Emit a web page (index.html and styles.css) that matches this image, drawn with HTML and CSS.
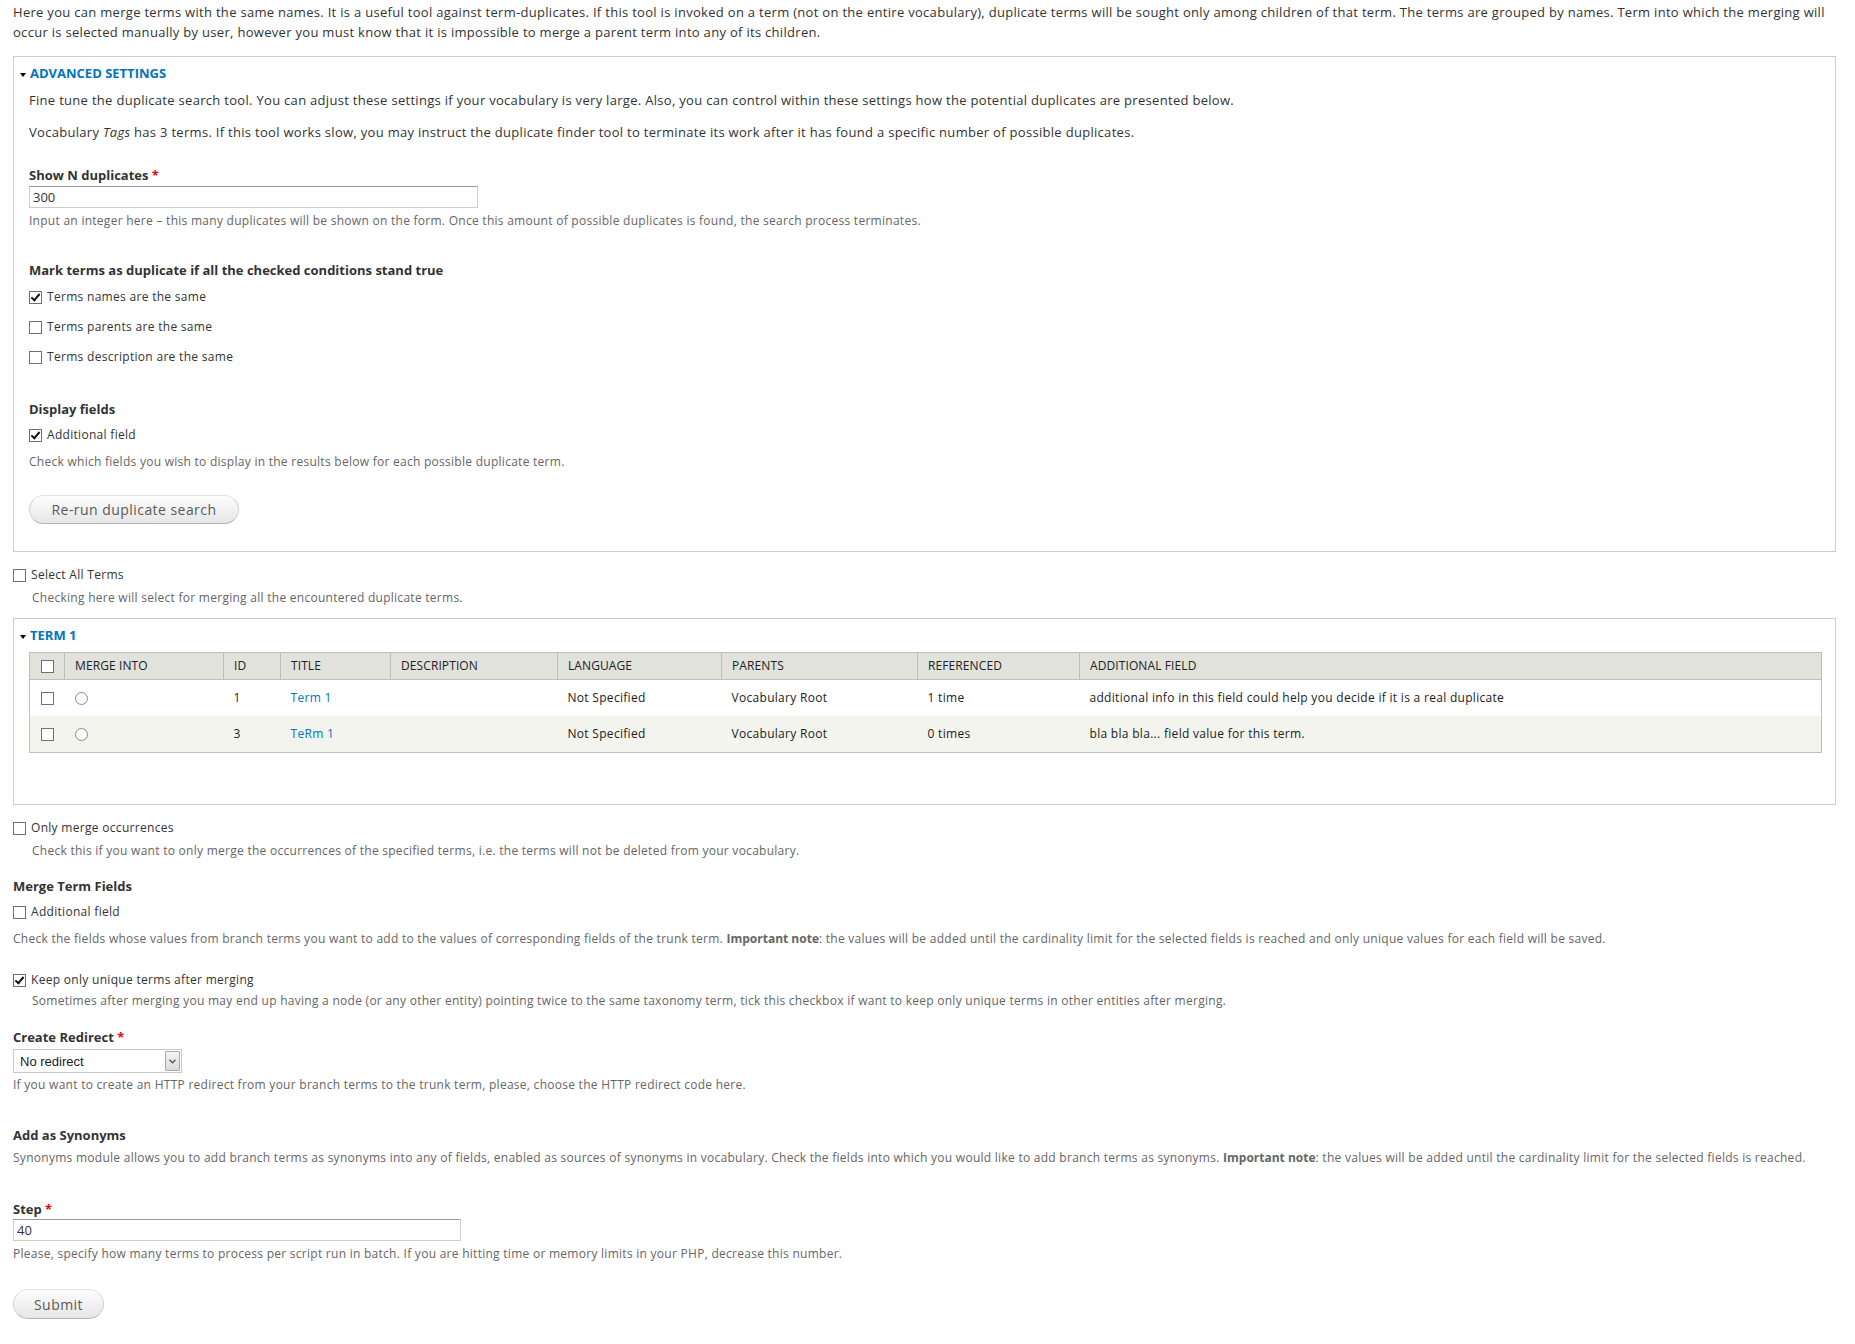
FILE: index.html
```html
<!DOCTYPE html>
<html lang="en">
<head>
  <meta charset="UTF-8" />
  <title>Merge duplicate terms</title>
  <link rel="stylesheet" href="styles.css">
</head>
<body>

  <p class="intro">Here you can merge terms with the same names. It is a useful tool against term-duplicates. If this tool is invoked on a term (not on the entire vocabulary), duplicate terms will be sought only among children of that term. The terms are grouped by names. Term into which the merging will occur is selected manually by user, however you must know that it is impossible to merge a parent term into any of its children.</p>

  <form onsubmit="event.preventDefault();">

    <div class="fieldset">
      <div class="legend"><a href="#">Advanced settings</a></div>
      <div class="fieldset-wrapper">
        <p class="lead">Fine tune the duplicate search tool. You can adjust these settings if your vocabulary is very large. Also, you can control within these settings how the potential duplicates are presented below.</p>
        <p class="lead last">Vocabulary <em>Tags</em> has 3 terms. If this tool works slow, you may instruct the duplicate finder tool to terminate its work after it has found a specific number of possible duplicates.</p>

        <div class="form-item">
          <label class="field-label" for="maxDupes">Show N duplicates <span class="req">*</span></label>
          <input class="form-text wide" type="text" id="maxDupes" value="300" />
          <div class="description">Input an integer here – this many duplicates will be shown on the form. Once this amount of possible duplicates is found, the search process terminates.</div>
        </div>

        <div class="form-item group">
          <div class="field-label">Mark terms as duplicate if all the checked conditions stand true</div>
          <label class="check first"><input type="checkbox" checked /> Terms names are the same</label>
          <label class="check"><input type="checkbox" /> Terms parents are the same</label>
          <label class="check"><input type="checkbox" /> Terms description are the same</label>
        </div>

        <div class="form-item group">
          <div class="field-label">Display fields</div>
          <label class="check tight"><input type="checkbox" checked /> Additional field</label>
          <div class="description gap">Check which fields you wish to display in the results below for each possible duplicate term.</div>
        </div>

        <button type="button" class="button rerun">Re-run duplicate search</button>
      </div>
    </div>

    <div class="form-item select-all">
      <label class="check"><input type="checkbox" /> Select All Terms</label>
      <div class="description indent">Checking here will select for merging all the encountered duplicate terms.</div>
    </div>

    <div class="fieldset term">
      <div class="legend"><a href="#">Term 1</a></div>
      <div class="fieldset-wrapper">
        <table class="dupes">
          <colgroup>
            <col class="c-check"><col class="c-merge"><col class="c-id"><col class="c-title">
            <col class="c-desc"><col class="c-lang"><col class="c-parents"><col class="c-ref"><col>
          </colgroup>
          <thead>
            <tr>
              <th><input type="checkbox" /></th>
              <th>Merge into</th>
              <th>ID</th>
              <th>Title</th>
              <th>Description</th>
              <th>Language</th>
              <th>Parents</th>
              <th>Referenced</th>
              <th>Additional field</th>
            </tr>
          </thead>
          <tbody>
            <tr class="odd">
              <td><input type="checkbox" /></td>
              <td><input type="radio" name="trunk" /></td>
              <td>1</td>
              <td><a href="#">Term 1</a></td>
              <td></td>
              <td>Not Specified</td>
              <td>Vocabulary Root</td>
              <td>1 time</td>
              <td>additional info in this field could help you decide if it is a real duplicate</td>
            </tr>
            <tr class="even">
              <td><input type="checkbox" /></td>
              <td><input type="radio" name="trunk" /></td>
              <td>3</td>
              <td><a href="#">TeRm 1</a></td>
              <td></td>
              <td>Not Specified</td>
              <td>Vocabulary Root</td>
              <td>0 times</td>
              <td>bla bla bla... field value for this term.</td>
            </tr>
          </tbody>
        </table>
      </div>
    </div>

    <div class="form-item only-occ">
      <label class="check"><input type="checkbox" /> Only merge occurrences</label>
      <div class="description indent">Check this if you want to only merge the occurrences of the specified terms, i.e. the terms will not be deleted from your vocabulary.</div>
    </div>

    <div class="form-item merge-fields">
      <div class="field-label">Merge Term Fields</div>
      <label class="check tight"><input type="checkbox" /> Additional field</label>
      <div class="description gap">Check the fields whose values from branch terms you want to add to the values of corresponding fields of the trunk term. <strong>Important note</strong>: the values will be added until the cardinality limit for the selected fields is reached and only unique values for each field will be saved.</div>
    </div>

    <div class="form-item keep-unique">
      <label class="check"><input type="checkbox" checked /> Keep only unique terms after merging</label>
      <div class="description indent near">Sometimes after merging you may end up having a node (or any other entity) pointing twice to the same taxonomy term, tick this checkbox if want to keep only unique terms in other entities after merging.</div>
    </div>

    <div class="form-item redirect">
      <label class="field-label" for="redirect">Create Redirect <span class="req">*</span></label>
      <div class="select-box">
        <select id="redirect" class="form-select">
          <option>No redirect</option>
          <option>301 Moved Permanently</option>
          <option>302 Found</option>
        </select>
        <span class="select-arrow">
          <svg width="7" height="5" viewBox="0 0 7 5"><path d="M0.5 0.8 L3.5 3.8 L6.5 0.8" fill="none" stroke="#555" stroke-width="1.3"/></svg>
        </span>
      </div>
      <div class="description tight">If you want to create an HTTP redirect from your branch terms to the trunk term, please, choose the HTTP redirect code here.</div>
    </div>

    <div class="form-item synonyms">
      <div class="field-label">Add as Synonyms</div>
      <div class="description">Synonyms module allows you to add branch terms as synonyms into any of fields, enabled as sources of synonyms in vocabulary. Check the fields into which you would like to add branch terms as synonyms. <strong>Important note</strong>: the values will be added until the cardinality limit for the selected fields is reached.</div>
    </div>

    <div class="form-item step">
      <label class="field-label" for="step">Step <span class="req">*</span></label>
      <input class="form-text" type="text" id="step" value="40" />
      <div class="description">Please, specify how many terms to process per script run in batch. If you are hitting time or memory limits in your PHP, decrease this number.</div>
    </div>

    <button type="submit" class="button submit">Submit</button>
  </form>

</body>
</html>
```

FILE: styles.css
```css
* {
  box-sizing: border-box;
}

body {
  font-family: "Open Sans", Arial, sans-serif;
  font-size: 13px;
  line-height: 20px;
  letter-spacing: 0.3px;
  color: #333;
  background: #fff;
  margin: 0;
  padding: 2px 19px 40px 13px;
}

a {
  color: #0074bd;
  text-decoration: none;
}

p {
  margin: 0;
}

strong {
  letter-spacing: 0;
}

.intro {
  margin-bottom: 14px;
}

/* collapsible fieldsets */
.fieldset {
  border: 1px solid #ccc;
  padding: 6px 13px 27px 15px;
}

.legend {
  font-weight: bold;
  text-transform: uppercase;
  letter-spacing: 0;
  margin: 0 0 7px -9px;
}

.legend::before {
  content: "";
  display: inline-block;
  border-left: 3px solid transparent;
  border-right: 3px solid transparent;
  border-top: 4px solid #000;
  margin-right: 4px;
  vertical-align: middle;
}

.lead {
  margin-bottom: 12px;
}

.lead.last {
  margin-bottom: 23px;
}

/* form items */
.field-label {
  display: block;
  font-weight: bold;
  letter-spacing: 0;
}

.req {
  color: #e00;
}

.form-text {
  display: block;
  width: 449px;
  height: 22px;
  margin-top: 1px;
  padding: 1px 3px;
  border: 1px solid #ccc;
  border-top-color: #999;
  font-family: inherit;
  font-size: 13px;
  color: #333;
}

.description {
  font-size: 12px;
  line-height: 20px;
  letter-spacing: 0.27px;
  color: #666;
  margin-top: 3px;
}

.description.indent {
  margin-left: 19px;
}

.description.near {
  margin-top: 1px;
}

.description.tight {
  margin-top: 2px;
}

.description.gap {
  margin-top: 7px;
}

.group {
  margin-top: 29px;
}

.group + .group {
  margin-top: 32px;
}

.check {
  display: flex;
  align-items: center;
  gap: 5px;
  font-size: 12px;
  margin-top: 10px;
}

.check.first {
  margin-top: 7px;
}

.check.tight {
  margin-top: 6px;
}

input[type="checkbox"] {
  appearance: none;
  display: inline-grid;
  place-content: center;
  width: 13px;
  height: 13px;
  margin: 0;
  border: 1px solid #707070;
  background: #fff;
  flex: none;
}

input[type="checkbox"]:checked::after {
  content: "";
  width: 3px;
  height: 7px;
  border-right: 2px solid #111;
  border-bottom: 2px solid #111;
  transform: translateY(-1px) rotate(40deg);
}

input[type="radio"] {
  appearance: none;
  display: block;
  width: 13px;
  height: 13px;
  margin: 0;
  border: 1px solid #8a8a8a;
  border-radius: 50%;
  background: #fcfcfc;
}

/* pill buttons */
.button {
  display: inline-block;
  font-family: inherit;
  font-size: 14px;
  line-height: 19px;
  letter-spacing: 0.45px;
  color: #5a5a5a;
  background: linear-gradient(#fdfdfd, #e6e6e6);
  border: 1px solid #d2d2d2;
  border-top-color: #e4e4e4;
  border-bottom-color: #b4b4b4;
  border-radius: 20px;
  padding: 4px 12px;
  cursor: pointer;
}

.rerun {
  width: 210px;
  height: 29px;
  margin-top: 23px;
}

.submit {
  width: 91px;
  height: 30px;
  margin-top: 25px;
}

/* below the settings */
.select-all {
  margin-top: 13px;
}

.select-all .check,
.only-occ .check,
.keep-unique .check {
  margin-top: 0;
}

.term {
  margin-top: 10px;
  padding-bottom: 51px;
}

.term .legend {
  margin-bottom: 7px;
}

table.dupes {
  width: 100%;
  table-layout: fixed;
  border-collapse: collapse;
  border: 1px solid #bebfb9;
  font-size: 12px;
}

.c-check { width: 35px; }
.c-merge { width: 159px; }
.c-id { width: 57px; }
.c-title { width: 110px; }
.c-desc { width: 167px; }
.c-lang { width: 164px; }
.c-parents { width: 196px; }
.c-ref { width: 162px; }

.dupes th {
  background: #e1e2dc;
  border: 1px solid #bebfb9;
  font-weight: normal;
  text-transform: uppercase;
  text-align: left;
  letter-spacing: 0.1px;
  padding: 3px 10px;
  line-height: 20px;
  color: #222;
}

.dupes td {
  padding: 8px 10px;
  line-height: 20px;
  color: #222;
}

.dupes th:first-child,
.dupes td:first-child {
  padding-left: 11px;
}

.dupes th input,
.dupes td input {
  vertical-align: middle;
}

.dupes tr.odd { background: #fff; }
.dupes tr.even { background: #f3f4ee; }

.only-occ {
  margin-top: 13px;
}

.merge-fields {
  margin-top: 15px;
}

.keep-unique {
  margin-top: 21px;
}

.redirect {
  margin-top: 16px;
}

/* select with a drawn drop-down button */
.select-box {
  display: flex;
  width: 169px;
  height: 24px;
  margin-top: 2px;
  border: 1px solid #c8c8c8;
  background: #fff;
  padding: 1px;
}

.form-select {
  appearance: none;
  flex: 1;
  min-width: 0;
  border: 0;
  background: transparent;
  font-family: "Liberation Sans", Arial, sans-serif;
  font-size: 13px;
  letter-spacing: 0;
  color: #222;
  padding: 0 5px;
  outline: none;
}

.select-arrow {
  display: flex;
  align-items: center;
  justify-content: center;
  width: 15px;
  border: 1px solid #a9a9a9;
  border-radius: 1px;
  background: linear-gradient(#f4f4f4, #dcdcdc);
}

.synonyms {
  margin-top: 30px;
}

.step {
  margin-top: 31px;
}

.step .form-text {
  width: 448px;
  margin-top: 0;
}
```
